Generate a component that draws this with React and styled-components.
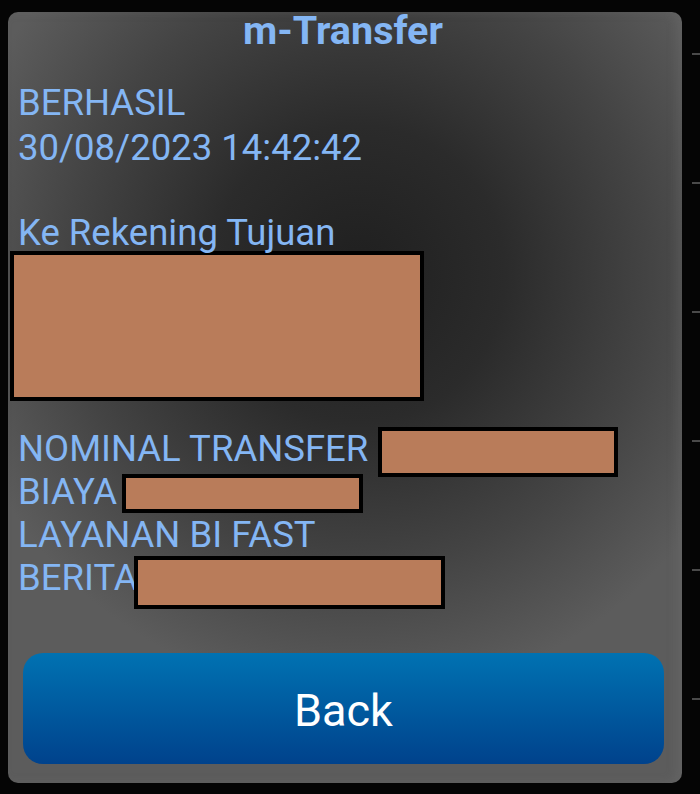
import React from "react";
import styled, { createGlobalStyle } from "styled-components";

const GlobalStyle = createGlobalStyle`
  html, body {
    margin: 0;
    padding: 0;
    background: #000;
  }
  body {
    font-family: Roboto, "Liberation Sans", sans-serif;
  }
`;

const Screen = styled.div`
  width: 700px;
  height: 794px;
  display: flex;
  background: #050505;
  overflow: hidden;
`;

const Panel = styled.div`
  box-sizing: border-box;
  width: 674px;
  height: 771px;
  margin: 12px 0 0 8px;
  padding: 0 18px 19px 10px;
  border-radius: 10px;
  display: flex;
  flex-direction: column;
  background:
    radial-gradient(ellipse 62% 55% at 52% 34%, #1f1f1f 0%, #2b2b2b 35%, #444 70%, #5c5c5c 100%),
    #5c5c5c;
  box-shadow: inset -6px 0 10px rgba(120, 120, 120, 0.25);
`;

const Ruler = styled.div`
  flex: 1;
  display: flex;
  flex-direction: column;
  align-items: flex-end;
  padding-top: 53px;
  gap: 127px;
`;

const Tick = styled.div`
  width: 8px;
  height: 2px;
  background: #4a4a4a;
`;

const Title = styled.h1`
  margin: 0 0 0 4px;
  font-size: 39.5px;
  line-height: 38px;
  font-weight: 700;
  color: #84b6f4;
  text-align: center;
`;

const Section = styled.div`
  margin-top: ${(p) => p.$top}px;
`;

const Line = styled.div`
  display: flex;
  align-items: flex-start;
  height: ${(p) => p.$h || 45}px;
  font-size: 36.5px;
  line-height: ${(p) => p.$h || 45}px;
  color: #84b6f4;
  white-space: nowrap;
`;

const Redact = styled.div`
  box-sizing: border-box;
  flex: none;
  width: ${(p) => p.$w}px;
  height: ${(p) => p.$h}px;
  margin-top: ${(p) => p.$top || 0}px;
  margin-left: ${(p) => p.$left || 0}px;
  background: #b97c5a;
  border: 4px solid #000;
`;

const BackButton = styled.button`
  margin: auto 0 0 5px;
  height: 111px;
  border: none;
  border-radius: 20px;
  background: linear-gradient(#0072b2, #00428c);
  color: #fff;
  font-family: Roboto, "Liberation Sans", sans-serif;
  font-size: 45px;
  padding-top: 4px;
  cursor: pointer;
`;

const ticks = [0, 1, 2, 3, 4, 5];

export default function App() {
  return (
    <Screen>
      <GlobalStyle />
      <Panel>
        <Title>m-Transfer</Title>
        <Section $top={30}>
          <Line>BERHASIL</Line>
          <Line>30/08/2023 14:42:42</Line>
        </Section>
        <Section $top={40}>
          <Line>Ke Rekening Tujuan</Line>
          <Redact $w={414} $h={150} $top={-4} $left={-8} />
        </Section>
        <Section $top={26}>
          <Line $h={43}>
            NOMINAL TRANSFER
            <Redact $w={240} $h={50} $left={10} />
          </Line>
          <Line $h={43}>
            BIAYA
            <Redact $w={241} $h={39} $top={4} $left={5} />
          </Line>
          <Line $h={43}>LAYANAN BI FAST</Line>
          <Line $h={43}>
            BERITA
            <Redact $w={311} $h={53} $left={-4} />
          </Line>
        </Section>
        <BackButton>Back</BackButton>
      </Panel>
      <Ruler>
        {ticks.map((t) => (
          <Tick key={t} />
        ))}
      </Ruler>
    </Screen>
  );
}
